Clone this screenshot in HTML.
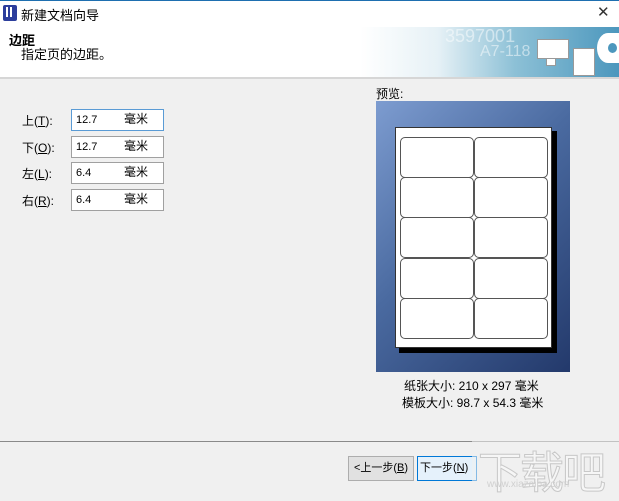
<!DOCTYPE html>
<html><head><meta charset="utf-8"><style>
body{margin:0;width:619px;height:493px;background:#f0f0f0;position:relative;overflow:hidden;font-family:"Liberation Sans","Noto Sans CJK SC",sans-serif;font-size:12px;color:#000}
.a{position:absolute;white-space:nowrap}
.inp{position:absolute;left:71px;width:91px;height:20px;border:1px solid #a0a0a0;background:#fff}
.inp span{position:absolute;top:4px;font-size:11px;line-height:12px}
.inp span.u{top:3px;font-size:12px;left:52px}
.lab{position:absolute;left:22px;font-size:12px}
.lb{position:absolute;width:72px;height:39px;border:1px solid #555;border-radius:5px;background:#fff}
</style></head><body>
<div class="a" style="left:0;top:0;width:619px;height:1px;background:#1e6fb0"></div>
<div class="a" style="left:0;top:1px;width:619px;height:76px;background:#fff"></div>
<div class="a" style="left:3px;top:5px;width:14px;height:16px;background:#2c3e9c;border-radius:2px"></div>
<div class="a" style="left:6px;top:7px;width:2px;height:10px;background:#fff"></div>
<div class="a" style="left:10px;top:7px;width:2px;height:10px;background:#fff"></div>
<div class="a" style="left:21px;top:5px;font-size:13px">新建文档向导</div>
<div class="a" style="left:597px;top:3px;font-size:15px;color:#333">✕</div>
<div class="a" style="left:360px;top:27px;width:259px;height:50px;background:linear-gradient(90deg,#fff 0%,#e6f1f6 30%,#8cc0d6 60%,#4c97bd 100%)"></div>
<div class="a" style="left:445px;top:26px;font-size:18px;color:#fff;opacity:.5">3597001</div>
<div class="a" style="left:480px;top:43px;font-size:16px;color:#fff;opacity:.5">A7-118</div>
<div class="a" style="left:537px;top:39px;width:30px;height:18px;background:#fff;border:1px solid #999"></div>
<div class="a" style="left:546px;top:58px;width:8px;height:6px;background:#fff;border:1px solid #999"></div>
<div class="a" style="left:573px;top:48px;width:20px;height:26px;background:#fff;border:1px solid #999"></div>
<div class="a" style="left:597px;top:33px;width:22px;height:30px;background:#fff;border-radius:50% 0 0 50%"></div>
<div class="a" style="left:608px;top:43px;width:9px;height:10px;background:#4c97bd;border-radius:50%"></div>
<div class="a" style="left:9px;top:30px;font-size:13px;font-weight:bold">边距</div>
<div class="a" style="left:21px;top:44px;font-size:13px">指定页的边距。</div>
<div class="a" style="left:0;top:77px;width:619px;height:2px;background:#d6d6d6"></div>

<div class="lab" style="top:112px">上(<u>T</u>):</div>
<div class="lab" style="top:139px">下(<u>O</u>):</div>
<div class="lab" style="top:165px">左(<u>L</u>):</div>
<div class="lab" style="top:192px">右(<u>R</u>):</div>
<div class="inp" style="top:109px;border-color:#5a9bd5"><span style="left:4px">12.7</span><span class="u">毫米</span></div>
<div class="inp" style="top:136px"><span style="left:4px">12.7</span><span class="u">毫米</span></div>
<div class="inp" style="top:162px"><span style="left:4px">6.4</span><span class="u">毫米</span></div>
<div class="inp" style="top:189px"><span style="left:4px">6.4</span><span class="u">毫米</span></div>

<div class="a" style="left:376px;top:85px">预览:</div>
<div class="a" style="left:376px;top:101px;width:194px;height:271px;background:linear-gradient(135deg,#7d9cd0 0%,#4a6aa0 45%,#23396b 100%)"></div>
<div class="a" style="left:399px;top:131px;width:158px;height:222px;background:#000"></div>
<div class="a" style="left:395px;top:127px;width:157px;height:221px;background:#fff;border:1px solid #333;box-sizing:border-box"></div>
<div class="lb" style="left:400px;top:137px"></div><div class="lb" style="left:474px;top:137px"></div>
<div class="lb" style="left:400px;top:177px"></div><div class="lb" style="left:474px;top:177px"></div>
<div class="lb" style="left:400px;top:217px"></div><div class="lb" style="left:474px;top:217px"></div>
<div class="lb" style="left:400px;top:258px"></div><div class="lb" style="left:474px;top:258px"></div>
<div class="lb" style="left:400px;top:298px"></div><div class="lb" style="left:474px;top:298px"></div>
<div class="a" style="left:404px;top:377px">纸张大小: 210 x 297 毫米</div>
<div class="a" style="left:402px;top:394px">模板大小: 98.7 x 54.3 毫米</div>

<div class="a" style="left:0;top:441px;width:619px;height:1px;background:#8a8a8a"></div>
<div class="a" style="left:348px;top:456px;width:66px;height:25px;background:#e1e1e1;border:1px solid #adadad;box-sizing:border-box;text-align:center;line-height:23px;font-size:11px">&lt;上一步(<u>B</u>)</div>
<div class="a" style="left:417px;top:456px;width:60px;height:25px;background:#e5f1fb;border:1px solid #0078d7;box-sizing:border-box;padding-left:2px;line-height:23px;font-size:11px">下一步(<u>N</u>)</div>
<div class="a" style="left:472px;top:440px;width:147px;height:53px;background:#f0f0f0;opacity:.55"></div>
<div class="a" style="left:478px;top:437px;font-size:44px;color:#f6f6f6;-webkit-text-stroke:1px #c8c8c8;letter-spacing:-2px">下载吧</div>
<div class="a" style="left:487px;top:479px;font-size:10px;color:#d0d0d0">www.xiazaiba.com</div>
</body></html>
